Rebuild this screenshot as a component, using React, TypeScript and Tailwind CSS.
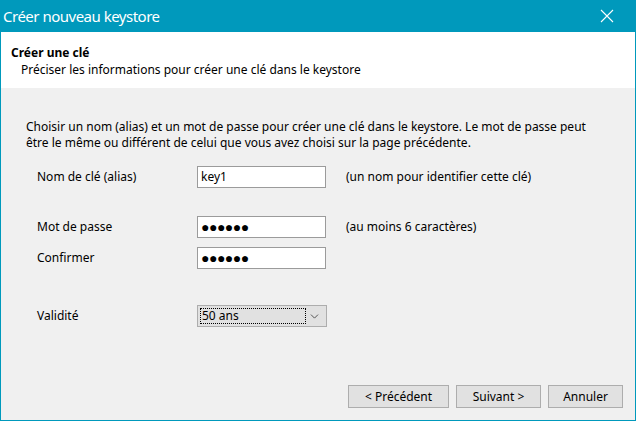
import { ChevronDown } from "lucide-react";

const font = { fontFamily: '"Noto Sans", "Open Sans", sans-serif' };

function Field({ value, password }: { value: string; password?: boolean }) {
  return (
    <div className="w-[129px] h-[22px] border border-[#9b9b9b] bg-white flex items-center pl-[3px] text-black">
      {password ? (
        <span className="text-[14px] tracking-[-0.5px] leading-none">●●●●●●</span>
      ) : (
        <span>{value}</span>
      )}
    </div>
  );
}

function Button({ label, w }: { label: string; w: string }) {
  return (
    <button
      className={`${w} h-[23px] border border-[#adadad] bg-[#e1e1e1] text-[#000] flex items-center justify-center`}
    >
      {label}
    </button>
  );
}

export default function App() {
  return (
    <div
      className="w-[636px] h-[421px] flex flex-col bg-[#f0f0f0] border-x border-b border-[#0099bc] text-[12px] text-black overflow-hidden"
      style={font}
    >
      {/* Title bar */}
      <div className="h-[32px] shrink-0 bg-[#0099bc] flex items-center justify-between pl-[3px] pr-[22px] -mx-px">
        <span className="text-white text-[15px] tracking-[-0.5px]">Créer nouveau keystore</span>
        <svg width="14" height="14" viewBox="0 0 14 14" className="text-white">
          <path d="M1 1 L13 13 M13 1 L1 13" stroke="currentColor" strokeWidth="1.1" fill="none" />
        </svg>
      </div>

      {/* Header */}
      <div className="h-[56px] shrink-0 bg-white flex flex-col pt-[12px] pl-[10px]">
        <span className="font-bold leading-[17px]">Créer une clé</span>
        <span className="pl-[10px] leading-[17px]">Préciser les informations pour créer une clé dans le keystore</span>
      </div>

      {/* Body */}
      <div className="flex-1 flex flex-col pl-[25px] pt-[31px]">
        <div className="w-[600px] leading-[16px]">
          <div>Choisir un nom (alias) et un mot de passe pour créer une clé dans le keystore. Le mot de passe peut</div>
          <div>être le même ou différent de celui que vous avez choisi sur la page précédente.</div>
        </div>

        <div className="flex items-center mt-[15px] pl-[11px]">
          <span className="w-[160px]">Nom de clé (alias)</span>
          <Field value="key1" />
          <span className="ml-[20px]">(un nom pour identifier cette clé)</span>
        </div>

        <div className="flex items-center mt-[28px] pl-[11px]">
          <span className="w-[160px]">Mot de passe</span>
          <Field value="" password />
          <span className="ml-[20px]">(au moins 6 caractères)</span>
        </div>

        <div className="flex items-center mt-[9px] pl-[11px]">
          <span className="w-[160px]">Confirmer</span>
          <Field value="" password />
        </div>

        <div className="flex items-center mt-[36px] pl-[11px]">
          <span className="w-[160px]">Validité</span>
          <div className="w-[130px] h-[22px] border border-[#adadad] bg-[#e1e1e1] flex items-center pl-[2px] pr-[5px]">
            <div className="w-[106px] h-[16px] border border-dotted border-black flex items-center pl-[1px]">
              50 ans
            </div>
            <ChevronDown size={13} strokeWidth={1.6} className="ml-auto text-[#404040]" />
          </div>
        </div>

        <div className="mt-auto mb-[12px] flex justify-end gap-[7px] pr-[12px]">
          <Button label="< Précédent" w="w-[101px]" />
          <Button label="Suivant >" w="w-[85px]" />
          <Button label="Annuler" w="w-[75px]" />
        </div>
      </div>
    </div>
  );
}
